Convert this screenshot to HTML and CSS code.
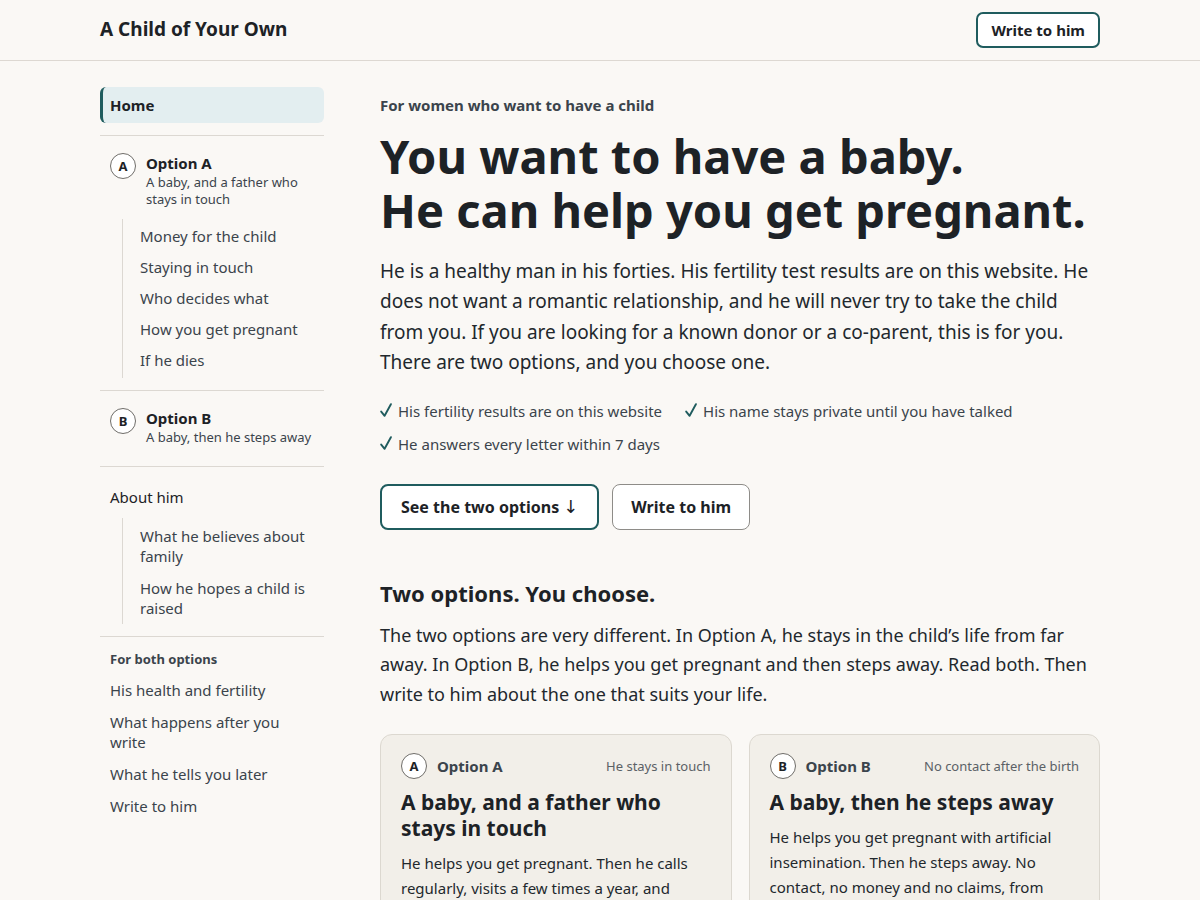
FILE: index.html
```html
<!DOCTYPE html>
<html lang="en">
  <head>
    <meta charset="UTF-8" />
    <meta name="viewport" content="width=device-width, initial-scale=1.0" />
    <title>A Child of Your Own</title>
    <link rel="stylesheet" href="styles.css">
  </head>
  <body>
    <header class="topbar">
      <div class="wrap topbar-inner">
        <a class="brand" href="#">A Child of Your Own</a>
        <a class="btn btn-outline btn-small" href="#write">Write to him</a>
      </div>
    </header>

    <div class="wrap layout">
      <nav class="sidebar">
        <a class="nav-home" href="#">Home</a>
        <hr />

        <div class="nav-option">
          <span class="letter">A</span>
          <div>
            <div class="option-title">Option A</div>
            <div class="option-sub">A baby, and a father who stays in touch</div>
          </div>
        </div>
        <ul class="sublist">
          <li><a href="#">Money for the child</a></li>
          <li><a href="#">Staying in touch</a></li>
          <li><a href="#">Who decides what</a></li>
          <li><a href="#">How you get pregnant</a></li>
          <li><a href="#">If he dies</a></li>
        </ul>
        <hr />

        <div class="nav-option">
          <span class="letter">B</span>
          <div>
            <div class="option-title">Option B</div>
            <div class="option-sub">A baby, then he steps away</div>
          </div>
        </div>
        <hr />

        <a class="nav-link about" href="#">About him</a>
        <ul class="sublist sublist-wrap">
          <li><a href="#">What he believes about family</a></li>
          <li><a href="#">How he hopes a child is raised</a></li>
        </ul>
        <hr />

        <div class="nav-label">For both options</div>
        <ul class="plainlist">
          <li><a href="#">His health and fertility</a></li>
          <li><a href="#">What happens after you write</a></li>
          <li><a href="#">What he tells you later</a></li>
          <li><a href="#">Write to him</a></li>
        </ul>
      </nav>

      <main class="main">
        <p class="eyebrow">For women who want to have a child</p>
        <h1>You want to have a baby.<br />He can help you get pregnant.</h1>
        <p class="lead">
          He is a healthy man in his forties. His fertility test results are on
          this website. He does not want a romantic relationship, and he will
          never try to take the child from you. If you are looking for a known
          donor or a co-parent, this is for you. There are two options, and you
          choose one.
        </p>

        <ul class="checks">
          <li>
            <svg class="tick" viewBox="0 0 12 14" width="12" height="14"><path d="M1.2 8.6 L4.6 12.8 L10.9 1.2" /></svg>
            His fertility results are on this website
          </li>
          <li>
            <svg class="tick" viewBox="0 0 12 14" width="12" height="14"><path d="M1.2 8.6 L4.6 12.8 L10.9 1.2" /></svg>
            His name stays private until you have talked
          </li>
          <li>
            <svg class="tick" viewBox="0 0 12 14" width="12" height="14"><path d="M1.2 8.6 L4.6 12.8 L10.9 1.2" /></svg>
            He answers every letter within 7 days
          </li>
        </ul>

        <div class="actions">
          <a class="btn btn-outline" href="#options">See the two options <span class="arrow">↓</span></a>
          <a class="btn btn-plain" href="#write">Write to him</a>
        </div>

        <h2 id="options">Two options. You choose.</h2>
        <p class="intro">
          The two options are very different. In Option A, he stays in the
          child’s life from far away. In Option B, he helps you get pregnant and
          then steps away. Read both. Then write to him about the one that suits
          your life.
        </p>

        <div class="cards">
          <article class="card">
            <div class="card-head">
              <span class="letter">A</span>
              <span class="card-name">Option A</span>
              <span class="card-tag">He stays in touch</span>
            </div>
            <h3>A baby, and a father who stays in touch</h3>
            <p>
              He helps you get pregnant. Then he calls regularly, visits a few
              times a year, and pays towards the child every month.
            </p>
          </article>
          <article class="card">
            <div class="card-head">
              <span class="letter">B</span>
              <span class="card-name">Option B</span>
              <span class="card-tag">No contact after the birth</span>
            </div>
            <h3>A baby, then he steps away</h3>
            <p>
              He helps you get pregnant with artificial insemination. Then he
              steps away. No contact, no money and no claims, from either side.
            </p>
          </article>
        </div>
      </main>
    </div>
  </body>
</html>
```

FILE: styles.css
```css
* {
  box-sizing: border-box;
  margin: 0;
  padding: 0;
}

body {
  background-color: #faf8f5;
  color: #1d2226;
  font-family: "Noto Sans", "Open Sans", sans-serif;
}

a {
  color: inherit;
  text-decoration: none;
}

ul {
  list-style: none;
}

.wrap {
  width: 1000px;
  margin: 0 auto;
}

/* header */

.topbar {
  height: 61px;
  border-bottom: 1px solid #ddd8d2;
}

.topbar-inner {
  height: 60px;
  display: flex;
  justify-content: space-between;
  align-items: center;
}

.brand {
  font-size: 19px;
  font-weight: 700;
  margin-top: -2px;
}

.btn {
  display: inline-flex;
  align-items: center;
  justify-content: center;
  font-weight: 700;
  border-radius: 8px;
}

.btn-outline {
  border: 2px solid #1f5c5e;
  background: #fff;
  height: 46px;
  padding: 0 19px;
  font-size: 16px;
}

.btn-small {
  height: 36px;
  padding: 0 13px;
  font-size: 15px;
  border-radius: 7px;
}

.btn-plain {
  border: 1px solid #8e8c88;
  background: #fff;
  height: 46px;
  padding: 0 18px;
  font-size: 16px;
}

.arrow {
  font-family: "DejaVu Sans", sans-serif;
  font-weight: 400;
  font-size: 18px;
  margin-left: 4px;
  line-height: 1;
  color: #1d2226;
}

/* layout */

.layout {
  display: flex;
  gap: 56px;
  padding-top: 26px;
}

.sidebar {
  width: 224px;
  flex-shrink: 0;
  font-size: 15px;
  color: #3b444c;
}

.sidebar hr {
  border: 0;
  border-top: 1px solid #dcd8d2;
  margin: 12px 0;
}

.nav-home {
  display: flex;
  align-items: center;
  height: 36px;
  padding-left: 7px;
  background: #e3eef0;
  border-left: 3px solid #1f5c5e;
  border-radius: 6px;
  font-weight: 700;
  color: #1d2226;
}

.nav-option {
  display: flex;
  gap: 10px;
  padding: 5px 10px 0;
}

.letter {
  width: 26px;
  height: 26px;
  flex-shrink: 0;
  border: 1px solid #6f6d69;
  border-radius: 50%;
  display: flex;
  align-items: center;
  justify-content: center;
  font-size: 13px;
  font-weight: 700;
  color: #1d2226;
  background: #fff;
}

.option-title {
  font-weight: 700;
  color: #1d2226;
  line-height: 20px;
}

.option-sub {
  font-size: 13px;
  line-height: 17px;
  margin-top: 1px;
  padding-bottom: 8px;
}

.sublist {
  margin: 3px 0 0 22px;
  border-left: 1px solid #dcd8d2;
  padding: 2px 0 2px 17px;
}

.sublist li a {
  display: block;
  padding: 5px 0;
  line-height: 21px;
}

.sublist-wrap {
  padding: 2px 0 0 17px;
}

.sublist-wrap li a {
  line-height: 20px;
  padding: 6px 0;
}

.nav-link {
  display: block;
  padding: 8px 10px 2px;
  line-height: 21px;
  color: #1d2226;
}

.about + .sublist {
  margin-top: 8px;
}

.nav-label {
  font-size: 13px;
  font-weight: 700;
  padding: 1px 10px 6px;
}

.plainlist li a {
  display: block;
  padding: 6px 10px;
  line-height: 20px;
}

/* main */

.main {
  width: 720px;
}

.eyebrow {
  font-size: 15px;
  font-weight: 700;
  color: #3b444c;
  margin-top: 8px;
}

h1 {
  font-size: 47px;
  line-height: 54px;
  font-weight: 700;
  margin: 14px 0 19px;
}

.lead {
  font-size: 19px;
  line-height: 30.4px;
  color: #22282d;
}

.checks {
  display: flex;
  flex-wrap: wrap;
  column-gap: 23px;
  row-gap: 11px;
  margin-top: 22px;
  font-size: 15px;
  line-height: 22px;
  color: #3b444c;
}

.checks li {
  display: flex;
  align-items: center;
  gap: 6px;
}

.tick {
  fill: none;
  stroke: #1f5c5e;
  stroke-width: 1.9;
  stroke-linecap: round;
  stroke-linejoin: round;
  margin-top: -1px;
}

.actions {
  display: flex;
  gap: 13px;
  margin-top: 29px;
}

h2 {
  font-size: 22px;
  font-weight: 700;
  margin-top: 48px;
  line-height: 30px;
}

.intro {
  font-size: 18px;
  line-height: 29.7px;
  margin-top: 13px;
  color: #22282d;
}

.cards {
  display: grid;
  grid-template-columns: 1fr 1fr;
  gap: 17px;
  margin-top: 24px;
}

.card {
  background: #f2efe9;
  border: 1px solid #dcd8d0;
  border-radius: 12px;
  padding: 18px 20px 20px;
}

.card-head {
  display: flex;
  align-items: center;
  gap: 10px;
}

.card-name {
  font-size: 15px;
  font-weight: 700;
  color: #3b444c;
}

.card-tag {
  margin-left: auto;
  font-size: 13px;
  color: #5b6166;
}

.card h3 {
  font-size: 21px;
  line-height: 26px;
  font-weight: 700;
  margin-top: 10px;
}

.card p {
  font-size: 15px;
  line-height: 25px;
  margin-top: 10px;
  padding-right: 10px;
  color: #22282d;
}
```
